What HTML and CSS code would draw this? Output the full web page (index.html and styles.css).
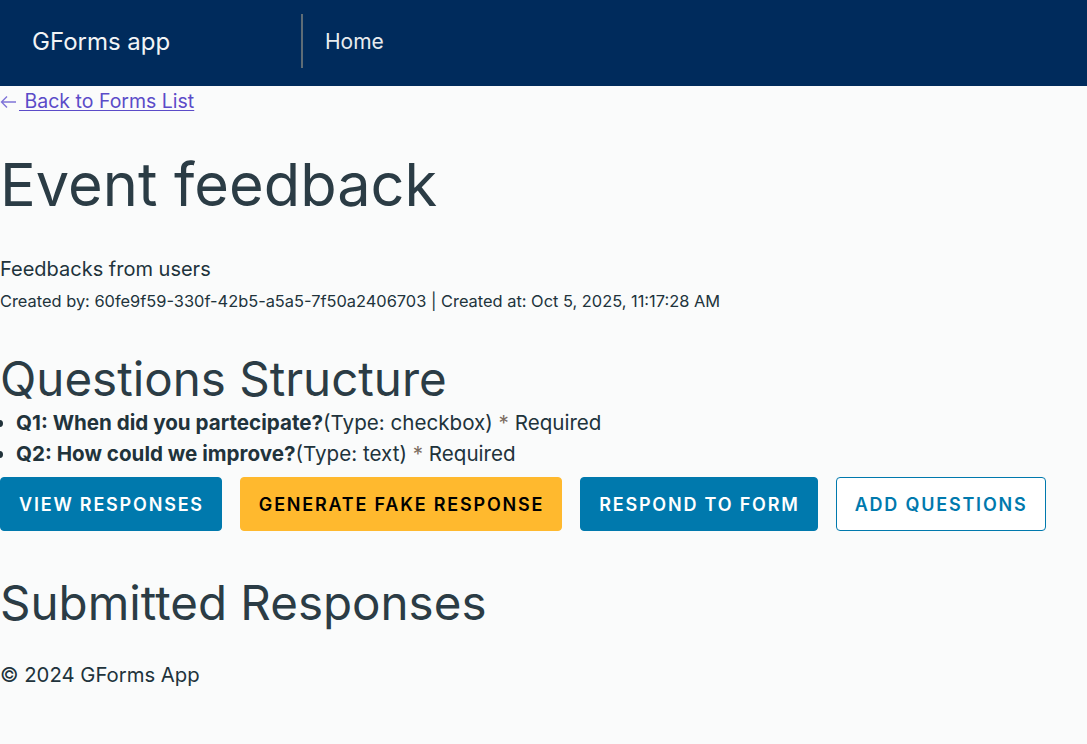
FILE: index.html
```html
<!DOCTYPE html>
<html lang="en">
<head>
<meta charset="utf-8">
<title>GForms app</title>
<link rel="stylesheet" href="styles.css">
</head>
<body>
<header class="header">
  <div class="branding">GForms app</div>
  <div class="divider"></div>
  <nav class="nav"><a class="nav-link" href="#">Home</a></nav>
</header>
<main class="content">
  <a class="back-link" href="#"><svg class="arrow" width="16" height="14" viewBox="0 0 16 14" aria-hidden="true"><path d="M16 7H1.5M7 1.5L1.5 7L7 12.5" fill="none" stroke="currentColor" stroke-width="1.4"/></svg> Back to Forms List</a>
  <h1 class="title">Event feedback</h1>
  <p class="description">Feedbacks from users</p>
  <p class="meta">Created by: 60fe9f59-330f-42b5-a5a5-7f50a2406703 | Created at: Oct 5, 2025, 11:17:28 AM</p>
  <h2 class="section-title">Questions Structure</h2>
  <ul class="questions">
    <li><strong>Q1: When did you partecipate?</strong>(Type: checkbox) <span class="req">*</span> Required</li>
    <li><strong>Q2: How could we improve?</strong>(Type: text) <span class="req">*</span> Required</li>
  </ul>
  <div class="actions">
    <button class="btn btn-primary">View Responses</button>
    <button class="btn btn-warning">Generate Fake Response</button>
    <button class="btn btn-primary">Respond to Form</button>
    <button class="btn btn-outline">Add Questions</button>
  </div>
  <h2 class="section-title responses-title">Submitted Responses</h2>
  <footer class="footer">&copy; 2024 GForms App</footer>
</main>
</body>
</html>
```
FILE: styles.css
```css
* { box-sizing: border-box; }
html, body { margin: 0; padding: 0; }
body {
  background: #fafbfb;
  color: #21333b;
  font-family: Inter, "Noto Sans", sans-serif;
}
.header {
  height: 86px;
  padding-bottom: 4px;
  background: #002b5c;
  display: flex;
  align-items: center;
}
.branding {
  width: 301px;
  padding-left: 32px;
  font-size: 24px;
  color: #f2f4f6;
}
.divider {
  width: 2px;
  height: 54px;
  background: #5d6c76;
}
.nav { padding-left: 22px; }
.nav-link {
  color: #e8ecef;
  text-decoration: none;
  font-size: 21px;
}
.content { padding: 0; }
.back-link {
  display: block;
  line-height: 30px;
  font-size: 19.5px;
  color: #5b4bc8;
  text-decoration: underline;
  text-underline-offset: 2px;
  width: max-content;
}
.arrow {
  display: inline-block;
  vertical-align: -1px;
  margin-right: 3px;
  color: #7f74d8;
}
.title {
  margin: 33px 0 0;
  font-size: 59.5px;
  line-height: 70px;
  font-weight: 400;
  color: #2b3c45;
}
.description {
  margin: 38px 0 0;
  font-size: 20px;
  line-height: 24px;
}
.meta {
  margin: 10px 0 0;
  font-size: 16.4px;
  line-height: 20px;
}
.section-title {
  margin: 40px 0 0;
  font-size: 47.5px;
  line-height: 56px;
  font-weight: 400;
  color: #2b3c45;
}
.questions {
  margin: 0;
  padding-left: 16px;
  font-size: 20.6px;
  line-height: 31px;
}
.questions strong { font-weight: 700; }
.req { color: #7d6e62; }
.actions {
  margin-top: 8px;
  display: flex;
  gap: 18px;
}
.btn {
  height: 54px;
  padding: 0 17px 0 18px;
  border-radius: 4px;
  font-family: Inter, sans-serif;
  font-size: 18px;
  font-weight: 600;
  letter-spacing: 0.1em;
  text-transform: uppercase;
  border: 1px solid transparent;
}
.btn-primary { background: #0079ad; color: #fff; border-color: #0079ad; }
.btn-warning { background: #ffb92e; color: #000; border-color: #ffb92e; }
.btn-outline { background: #fff; color: #0079ad; border-color: #0079ad; }
.responses-title { margin-top: 44px; }
.footer {
  margin-top: 32px;
  font-size: 20.3px;
  line-height: 24px;
}
```
